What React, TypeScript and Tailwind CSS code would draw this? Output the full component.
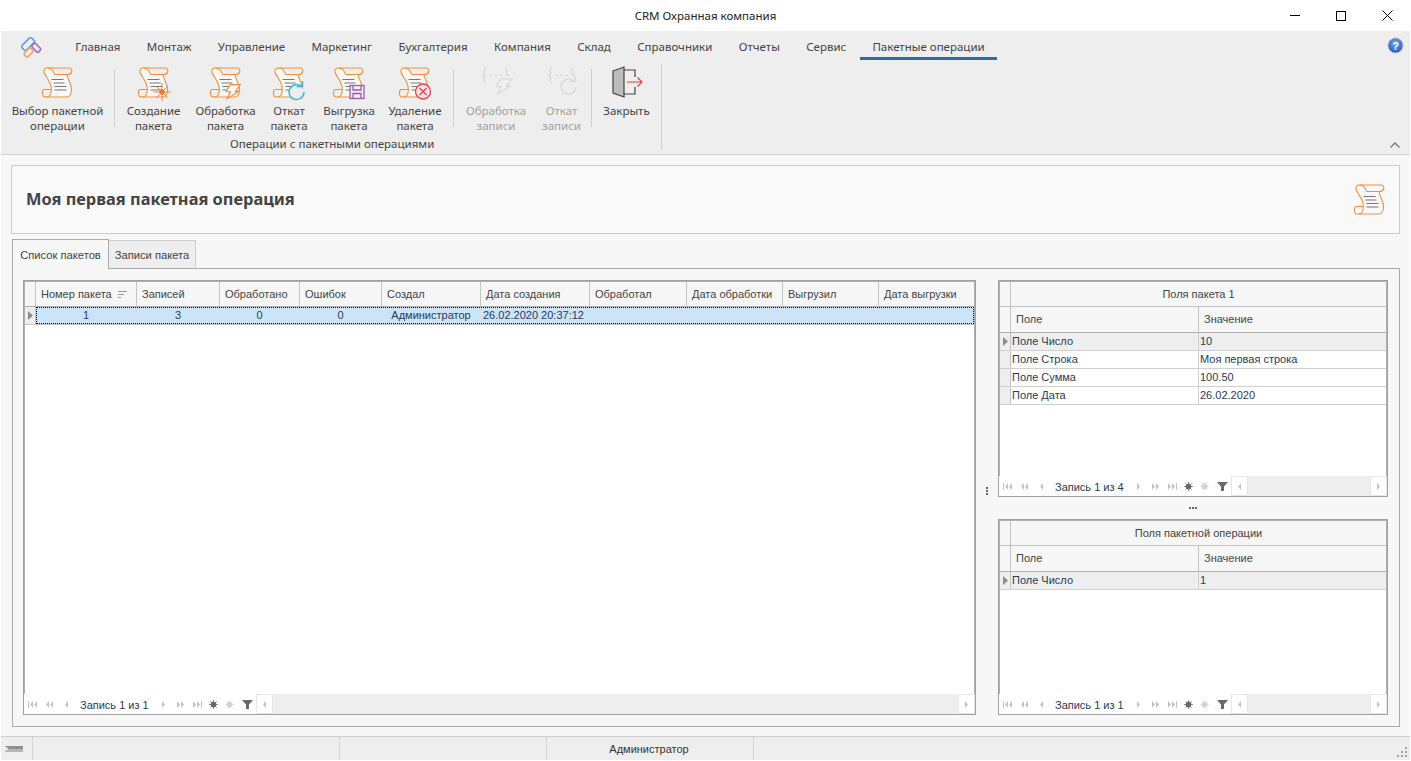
import React from 'react'

const RIBBON_TABS = ['Главная', 'Монтаж', 'Управление', 'Маркетинг', 'Бухгалтерия', 'Компания', 'Склад', 'Справочники', 'Отчеты', 'Сервис']

function ScrollIcon({ badge }: { badge?: 'star' | 'bolt' | 'undo' | 'save' | 'cross' }) {
  return (
    <svg width="34" height="34" viewBox="-0.5 -2 34 34" fill="none" className="overflow-visible">
      <path
        d="M13 7.5H26C26 12 30 17 30 23C30 27 28 30 25 30H5C9.5 30 10.5 24 9.5 19C8 13 3.5 9 2.5 5C2 3 3 1 6 1C9 1 11 3 12 5C12.5 6 13 7 13 7.5Z"
        fill="#f8f8f8"
      />
      <g stroke="#f0913a" strokeWidth="1.1">
        <path d="M6 1H27C30 1 31 3 30 5C29.5 7 28.5 7.5 26 7.5H13" />
        <path d="M6 1C3 1 2 3 2.5 5C3.5 9 8 13 9.5 19C10.5 24 9.5 30 5 30" />
        <path d="M6 1C9 1 11 3 12 5C12.5 6 13 7 13 7.5" />
        <path d="M25.5 7.5C26 12 30 17 30 23C30 27 28 30 25 30H5" />
        <path d="M9.5 22.5H3C0 22.5 0 30 4 30H5" />
      </g>
      <path d="M10 12.5H22M12 16H23M13 19.5H25M13 23H25" stroke="#777" strokeWidth="1" />
      {badge === 'star' && (
        <g stroke="#ec7a2a" strokeWidth="0.9">
          <path d="M24.5 16V34M16 25H33M19 19.5L30 30.5M30 19.5L19 30.5" />
          <circle cx="24.5" cy="25" r="2.4" fill="#ec7a2a" />
        </g>
      )}
      {badge === 'bolt' && (
        <path d="M20.7 17.7H30.7L26 24.3H29.3L17.7 31.7L21 25L16.7 24.3Z" fill="#f8f8f8" stroke="#f0913a" strokeWidth="1.2" />
      )}
      {badge === 'undo' && (
        <g stroke="#3bb8d6" strokeWidth="1.5">
          <path d="M29 19.5A7.5 7.5 0 1 0 31.5 25" fill="#eeeeee" />
          <path d="M24 19.5H30V14" />
        </g>
      )}
      {badge === 'save' && (
        <g stroke="#9b59b6" strokeWidth="1.3">
          <rect x="17.5" y="18.5" width="14" height="13" fill="#f0f0f0" />
          <path d="M20.5 18.5V23H28.5V18.5M20.5 31.5V26.5H28.5V31.5" />
        </g>
      )}
      {badge === 'cross' && (
        <g stroke="#e8434f" strokeWidth="1.3">
          <circle cx="24.5" cy="24.5" r="7.5" fill="#f7e3e4" />
          <path d="M21 21L28 28M28 21L21 28" />
        </g>
      )}
    </svg>
  )
}

function BracesIcon({ badge }: { badge: 'bolt' | 'undo' }) {
  return (
    <svg width="34" height="34" viewBox="-1 -1 34 34" fill="none" stroke="#d6d6d6" strokeWidth="1.2" className="overflow-visible">
      <path d="M6 2C3.5 2 4.5 5 4.5 7C4.5 8.5 3.5 9.5 2 9.5C3.5 9.5 4.5 10.5 4.5 12C4.5 14 3.5 17 6 17" />
      <path d="M25 2C27.5 2 26.5 5 26.5 7C26.5 8.5 27.5 9.5 29 9.5" />
      <path d="M10 9.5H11.5M15 9.5H16.5M20 9.5H21.5" stroke="#c8c8c8" />
      {badge === 'bolt' ? (
        <path d="M21 13H32L26 20H30L17.5 28L21 21L16.5 20Z" fill="#f1f1f1" />
      ) : (
        <g>
          <path d="M28 15.5A7.5 7.5 0 1 0 30 21" fill="#eeeeee" />
          <path d="M23 15.5H29V10" />
        </g>
      )}
    </svg>
  )
}

function DoorIcon() {
  return (
    <svg width="34" height="34" viewBox="-1 -1 34 34" fill="none">
      <path d="M2 5L13 1V31L2 27Z" fill="#bdbdbd" stroke="#444" strokeWidth="1.2" />
      <path d="M13 4H24V11M24 21V28H13" stroke="#444" strokeWidth="1.2" />
      <path d="M16 16H31M26.5 11.5L31 16L26.5 20.5" stroke="#ee3b3b" strokeWidth="1.2" />
    </svg>
  )
}

function RibbonButton({ icon, lines, width, muted }: { icon: React.ReactNode; lines: string[]; width: string; muted?: boolean }) {
  return (
    <div className={`flex flex-col items-center ${width}`}>
      <div className="h-[34px] mt-[1px]">{icon}</div>
      <div className={`mt-[4px] text-center leading-[15px] ${muted ? 'text-[#a0a0a0]' : 'text-[#444]'}`}>
        {lines.map((l) => (
          <div key={l} className="whitespace-nowrap">{l}</div>
        ))}
      </div>
    </div>
  )
}

function Sep() {
  return <div className="w-px h-[58px] mt-[5px] bg-[#cfcfcf] shrink-0" />
}

function PagerGlyph({ kind, dim = true }: { kind: string; dim?: boolean }) {
  const c = dim ? '#c4c4c4' : '#6a6a6a'
  return (
    <svg width="11" height="9" viewBox="0 0 11 9" fill={c}>
      {kind === 'first' && <path d="M1 1H2V8H1ZM6 1V8L3 4.5ZM10 1V8L7 4.5Z" />}
      {kind === 'prev2' && <path d="M5 1V8L2 4.5ZM9 1V8L6 4.5Z" />}
      {kind === 'prev' && <path d="M7 1V8L4 4.5Z" />}
      {kind === 'next' && <path d="M4 1V8L7 4.5Z" />}
      {kind === 'next2' && <path d="M2 1V8L5 4.5ZM6 1V8L9 4.5Z" />}
      {kind === 'last' && <path d="M1 1V8L4 4.5ZM5 1V8L8 4.5ZM9 1H10V8H9Z" />}
    </svg>
  )
}

function Burst({ color }: { color: string }) {
  return (
    <svg width="9" height="9" viewBox="0 0 9 9" fill={color} stroke={color} strokeWidth="0.7">
      <circle cx="4.5" cy="4.5" r="2.6" />
      <path d="M4.5 0V9M0 4.5H9M1.3 1.3L7.7 7.7M7.7 1.3L1.3 7.7" />
    </svg>
  )
}

function Pager({ text }: { text: string }) {
  const box = 'w-[17px] flex items-center justify-center shrink-0'
  return (
    <div className="h-[20px] flex items-center shrink-0 bg-white">
      <div className="flex">
        <div className={box}><PagerGlyph kind="first" /></div>
        <div className={box}><PagerGlyph kind="prev2" /></div>
        <div className={box}><PagerGlyph kind="prev" /></div>
      </div>
      <div className="w-[80px] pl-[5px] pt-[2px] text-[#2b3a55] whitespace-nowrap shrink-0">{text}</div>
      <div className={box}><PagerGlyph kind="next" /></div>
      <div className={box}><PagerGlyph kind="next2" /></div>
      <div className={box}><PagerGlyph kind="last" /></div>
      <div className="w-[15px] flex justify-center shrink-0"><Burst color="#666" /></div>
      <div className="w-[17px] flex justify-center shrink-0"><Burst color="#d2d2d2" /></div>
      <div className="w-[18px] flex justify-center shrink-0">
        <svg width="11" height="9" viewBox="0 0 11 9" fill="#6a6a6a"><path d="M0 0H11L7 4.5V9L4 9V4.5Z" /></svg>
      </div>
      <div className="flex-1 h-full flex bg-[#eeeeee] min-w-0">
        <div className="w-[17px] h-full bg-white border border-[#e6e6e6] flex items-center justify-center"><PagerGlyph kind="prev" /></div>
        <div className="flex-1" />
        <div className="w-[17px] h-full bg-white border border-[#e6e6e6] flex items-center justify-center"><PagerGlyph kind="next" /></div>
      </div>
    </div>
  )
}

function RowMark() {
  return (
    <svg width="5" height="9" viewBox="0 0 5 9" fill="#8d8d8d"><path d="M0 0L5 4.5L0 9Z" /></svg>
  )
}

const mainCols = 'grid grid-cols-[11px_101px_83px_80px_82px_99px_109px_97px_96px_96px_1fr]'
const sideCols = 'grid grid-cols-[11px_188px_1fr]'
const mainHead = ['Номер пакета', 'Записей', 'Обработано', 'Ошибок', 'Создал', 'Дата создания', 'Обработал', 'Дата обработки', 'Выгрузил', 'Дата выгрузки']
const mainRow = ['1', '3', '0', '0', 'Администратор', '26.02.2020 20:37:12', '', '', '', '']

function MainGrid() {
  return (
    <div className="flex-1 min-w-0 flex flex-col border border-[#a0a0a0] bg-white">
      <div className="flex-1 min-h-0 border-t border-x border-[#b0b0b0]">
        <div className={`${mainCols} h-[25px] bg-[#f6f6f6] border-b border-[#b0b0b0]`}>
          <div className="border-r border-[#c4c4c4]" />
          {mainHead.map((h, i) => (
            <div key={h} className="border-r border-[#c4c4c4] last:border-r-0 pl-[5px] flex items-center text-[#444] whitespace-nowrap">
              {h}
              {i === 0 && (
                <svg className="ml-[6px]" width="9" height="7" viewBox="0 0 9 7" stroke="#999"><path d="M0 .5H9M0 3.5H6M0 6.5H3" /></svg>
              )}
            </div>
          ))}
        </div>
        <div className={`${mainCols} h-[18px] border-b border-[#c8c8c8]`}>
          <div className="bg-[#eeeeee] border-r border-[#c4c4c4] flex items-center justify-center"><RowMark /></div>
          <div className="col-span-10 grid grid-cols-[101px_83px_80px_82px_99px_109px_97px_96px_96px_1fr] bg-[#cbe4f8] outline-1 outline-dotted outline-offset-[-1px] outline-black">
            {mainRow.map((v, i) => (
              <div key={i} className={`border-r border-[#d8dfe6] last:border-r-0 flex items-center whitespace-nowrap text-[#2b3a55] ${i < 5 ? 'justify-center' : 'pl-[2px]'}`}>{v}</div>
            ))}
          </div>
        </div>
      </div>
      <Pager text="Запись 1 из 1" />
    </div>
  )
}

function SideGrid({ title, rows, pager, cls }: { title: string; rows: string[][]; pager: string; cls: string }) {
  return (
    <div className={`flex flex-col border border-[#a0a0a0] bg-white ${cls}`}>
      <div className="flex-1 min-h-0 border-t border-x border-[#b0b0b0]">
        <div className={`${sideCols} h-[25px] bg-[#f6f6f6] border-b border-[#c4c4c4]`}>
          <div className="border-r border-[#c4c4c4]" />
          <div className="col-span-2 flex items-center justify-center text-[#444]">{title}</div>
        </div>
        <div className={`${sideCols} h-[26px] bg-[#f6f6f6] border-b border-[#b0b0b0]`}>
          <div className="border-r border-[#c4c4c4]" />
          <div className="border-r border-[#c4c4c4] pl-[5px] flex items-center text-[#444]">Поле</div>
          <div className="pl-[5px] flex items-center text-[#444]">Значение</div>
        </div>
        {rows.map((r, i) => (
          <div key={r[0]} className={`${sideCols} h-[18px] border-b border-[#d0d0d0] ${i === 0 ? 'bg-[#eeeeee]' : ''}`}>
            <div className="bg-[#eeeeee] border-r border-[#c4c4c4] flex items-center justify-center">{i === 0 && <RowMark />}</div>
            <div className="border-r border-[#d0d0d0] pl-px flex items-center text-[#2b3a55]">{r[0]}</div>
            <div className="pl-px flex items-center text-[#2b3a55]">{r[1]}</div>
          </div>
        ))}
      </div>
      <Pager text={pager} />
    </div>
  )
}

export default function App() {
  return (
    <div className="h-screen w-full overflow-hidden bg-white px-px pb-px flex flex-col text-[11px] font-['Liberation_Sans',sans-serif]">
      {/* title bar */}
      <div className="h-[31px] shrink-0 flex items-center relative bg-white font-['Noto_Sans',sans-serif] text-[11.5px] text-[#222]">
        <div className="flex-1 text-center">CRM Охранная компания</div>
        <div className="absolute right-0 top-0 h-[31px] flex items-center">
          <div className="w-[46px] flex justify-center"><div className="w-[10px] h-px bg-black" /></div>
          <div className="w-[46px] flex justify-center"><div className="w-[10px] h-[10px] border border-black" /></div>
          <div className="w-[46px] flex justify-center">
            <svg width="11" height="11" viewBox="0 0 11 11" stroke="#000"><path d="M.5 .5L10.5 10.5M10.5 .5L.5 10.5" /></svg>
          </div>
        </div>
      </div>

      {/* ribbon */}
      <div className="h-[124px] shrink-0 bg-[#eeeeee] border-b border-[#cfcfcf] font-['Noto_Sans',sans-serif] text-[11.5px] flex flex-col relative">
        <div className="h-[29px] flex items-start shrink-0">
          <div className="w-[60px] h-[29px] flex items-start pl-[20px] pt-[6px]">
            <svg width="22" height="22" viewBox="0 0 24 24" fill="none" strokeWidth="1.8">
              <rect x="0.2" y="4.2" width="15" height="7" rx="1.5" transform="rotate(-45 7.7 7.7)" stroke="#5b9fe0" />
              <rect x="11.7" y="9" width="10" height="5.5" rx="1.5" transform="rotate(45 16.7 11.7)" stroke="#a66cc0" />
              <rect x="3.3" y="14.2" width="10" height="5.5" rx="1.5" transform="rotate(-45 8.3 17)" stroke="#f2a56a" />
            </svg>
          </div>
          <div className="flex items-start h-[29px] pl-[1px]">
            {RIBBON_TABS.map((t) => (
              <div key={t} className="px-[13.2px] text-[#444] whitespace-nowrap pt-[7px]">{t}</div>
            ))}
            <div className="h-[29px] ml-[1px] px-[12px] pt-[7px] text-[#444] border-b-[3px] border-[#2b6ca8] whitespace-nowrap">Пакетные операции</div>
          </div>
          <div className="ml-auto mr-[6px] mt-[6px]">
            <svg width="17" height="17" viewBox="0 0 17 17">
              <defs>
                <radialGradient id="help" cx="50%" cy="35%" r="65%">
                  <stop offset="0%" stopColor="#7aa8ee" />
                  <stop offset="100%" stopColor="#1f55c8" />
                </radialGradient>
              </defs>
              <circle cx="8.5" cy="8.5" r="7.5" fill="url(#help)" stroke="#b8b8b8" strokeWidth="1" />
              <text x="8.5" y="12.5" textAnchor="middle" fontSize="11" fontWeight="700" fill="#fff" fontFamily="Liberation Sans">?</text>
            </svg>
          </div>
        </div>
        <div className="flex items-start pt-[4px]">
          <RibbonButton width="w-[113px]" icon={<ScrollIcon />} lines={['Выбор пакетной', 'операции']} />
          <Sep />
          <div className="flex items-start">
            <RibbonButton width="w-[77px]" icon={<ScrollIcon badge="star" />} lines={['Создание', 'пакета']} />
            <RibbonButton width="w-[67px]" icon={<ScrollIcon badge="bolt" />} lines={['Обработка', 'пакета']} />
            <RibbonButton width="w-[60px]" icon={<ScrollIcon badge="undo" />} lines={['Откат', 'пакета']} />
            <RibbonButton width="w-[60px]" icon={<ScrollIcon badge="save" />} lines={['Выгрузка', 'пакета']} />
            <RibbonButton width="w-[72px]" icon={<ScrollIcon badge="cross" />} lines={['Удаление', 'пакета']} />
            <div className="w-[2px] shrink-0" />
            <Sep />
            <RibbonButton width="w-[84px]" muted icon={<BracesIcon badge="bolt" />} lines={['Обработка', 'записи']} />
            <RibbonButton width="w-[53px] pr-[6px]" muted icon={<BracesIcon badge="undo" />} lines={['Откат', 'записи']} />
            <Sep />
            <RibbonButton width="w-[69px]" icon={<DoorIcon />} lines={['Закрыть']} />
          </div>
          <div className="w-px h-[86px] bg-[#cfcfcf] shrink-0" />
        </div>
        <div className="absolute left-[229px] top-[104px] text-[#444] whitespace-nowrap">Операции с пакетными операциями</div>
        <div className="absolute right-[10px] bottom-[6px]">
          <svg width="10" height="6" viewBox="0 0 10 6" fill="none" stroke="#777" strokeWidth="1.4"><path d="M.5 5.5L5 1L9.5 5.5" /></svg>
        </div>
      </div>

      {/* content */}
      <div className="flex-1 min-h-0 bg-[#f7f7f7] px-[10px] pt-[10px] flex flex-col">
        <div className="h-[69px] shrink-0 border border-[#cccccc] bg-[#f9f9f9] flex items-center justify-between pl-[14px] pr-[12px]">
          <div className="font-['Noto_Sans',sans-serif] text-[16.4px] font-bold text-[#444]">Моя первая пакетная операция</div>
          <div className="mb-[2px]"><ScrollIcon /></div>
        </div>

        <div className="h-[30px] mt-[5px] shrink-0 flex items-end pl-px relative z-10 text-[11.2px]">
          <div className="h-[30px] w-[97px] pt-[2px] border border-b-0 border-[#aaaaaa] bg-[#f7f7f7] flex items-center justify-center text-[#444]">Список пакетов</div>
          <div className="h-[29px] w-[87px] pt-[2px] border-r border-t border-[#cccccc] bg-[#eeeeee] border-b border-b-[#aaaaaa] flex items-center justify-center text-[#444]">Записи пакета</div>
        </div>

        <div className="flex-1 min-h-0 -mt-px border border-[#aaaaaa] flex pt-[11px] pb-[11px] pl-[10px] pr-[11px] ml-px">
          <MainGrid />
          <div className="w-[22px] shrink-0 flex items-center justify-center pb-[8px]">
            <div className="flex flex-col gap-px mb-[5px]">
              <div className="w-[2px] h-[2px] bg-[#666]" />
              <div className="w-[2px] h-[2px] bg-[#666]" />
              <div className="w-[2px] h-[2px] bg-[#666]" />
            </div>
          </div>
          <div className="w-[390px] shrink-0 flex flex-col">
            <SideGrid cls="h-[217px] shrink-0" title="Поля пакета 1" pager="Запись 1 из 4" rows={[['Поле Число', '10'], ['Поле Строка', 'Моя первая строка'], ['Поле Сумма', '100.50'], ['Поле Дата', '26.02.2020']]} />
            <div className="h-[22px] shrink-0 flex items-center justify-center gap-px">
              <div className="w-[2px] h-[2px] bg-[#666]" />
              <div className="w-[2px] h-[2px] bg-[#666]" />
              <div className="w-[2px] h-[2px] bg-[#666]" />
            </div>
            <SideGrid cls="flex-1 min-h-0" title="Поля пакетной операции" pager="Запись 1 из 1" rows={[['Поле Число', '1']]} />
          </div>
        </div>
        <div className="h-[9px] shrink-0" />
      </div>

      {/* status bar */}
      <div className="h-[24px] shrink-0 bg-[#eeeeee] border-t border-[#cfcfcf] flex items-stretch relative">
        <div className="w-[32px] border-r border-[#d4d4d4] flex items-center pl-[4px]">
          <svg width="18" height="8" viewBox="0 0 18 8">
            <path d="M0 1H18V7H0Z" fill="#8f8f8f" />
            <path d="M0 1L4 4L0 7Z" fill="#e6e6e6" />
            <path d="M4 4H18V7H0Z" fill="#b5b5b5" />
          </svg>
        </div>
        <div className="w-[307px] border-r border-[#d4d4d4]" />
        <div className="w-[207px] border-r border-[#d4d4d4]" />
        <div className="w-[207px] border-r border-[#d4d4d4] flex items-center justify-center pt-px pr-[2px] text-[#333]">Администратор</div>
        <div className="absolute right-[3px] bottom-[3px]">
          <svg width="11" height="11" viewBox="0 0 11 11" fill="#a5a5a5">
            <path d="M9 1h2v2H9zM5 5h2v2H5zM9 5h2v2H9zM1 9h2v2H1zM5 9h2v2H5zM9 9h2v2H9z" />
          </svg>
        </div>
      </div>
    </div>
  )
}
